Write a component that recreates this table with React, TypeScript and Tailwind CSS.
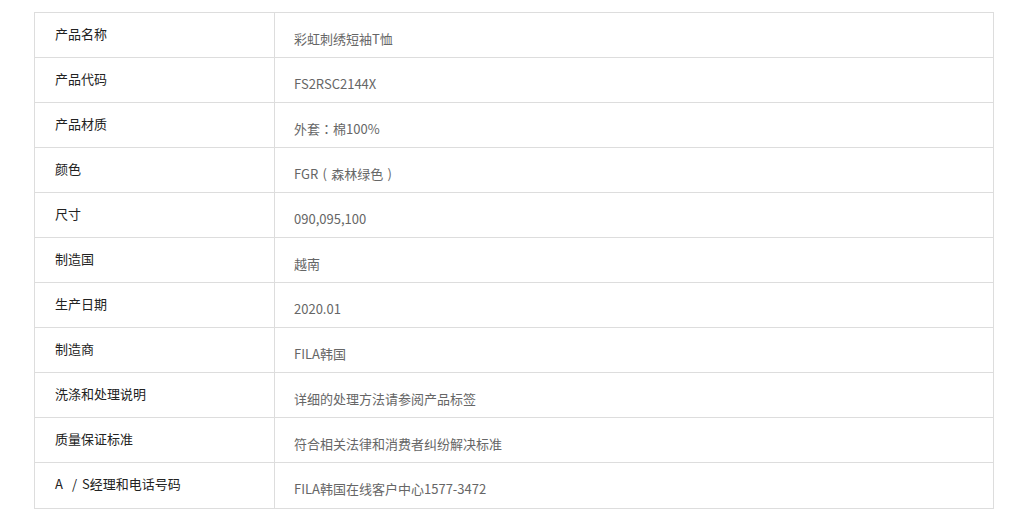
import type React from "react"

// full-width punctuation centred in its box, as in the reference font
const P = ({ c }: { c: string }) => (
  <span style={{ fontFamily: '"Noto Sans CJK TC", sans-serif' }}>{c}</span>
)
const Box = ({ c }: { c: string }) => <span className="inline-block w-[13px] text-center">{c}</span>

const rows: [React.ReactNode, React.ReactNode][] = [
  ["产品名称", "彩虹刺绣短袖T恤"],
  ["产品代码", "FS2RSC2144X"],
  ["产品材质", <>外套<P c="：" />棉100%</>],
  ["颜色", <>FGR<Box c="(" />森林绿色<Box c=")" /></>],
  ["尺寸", "090,095,100"],
  ["制造国", "越南"],
  ["生产日期", "2020.01"],
  ["制造商", "FILA韩国"],
  ["洗涤和处理说明", "详细的处理方法请参阅产品标签"],
  ["质量保证标准", "符合相关法律和消费者纠纷解决标准"],
  [<>A<span className="ml-[9px] mr-[5px]">/</span>S经理和电话号码</>, "FILA韩国在线客户中心1577-3472"],
]

export default function App() {
  return (
    <div
      className="min-h-[529px] bg-white pt-[12px] pl-[34px]"
      style={{ fontFamily: '"Microsoft YaHei", "Noto Sans CJK SC", sans-serif' }}
    >
      <div className="w-[960px] border border-[#dddddd] text-[13px]">
        {rows.map(([label, value], i) => (
          <div
            key={i}
            className={`grid grid-cols-[240px_1fr] h-[45px] ${i < rows.length - 1 ? "border-b border-[#dddddd]" : ""}`}
          >
            <div className="flex items-center pl-[20px] pb-[3px] border-r border-[#dddddd] text-[#222222]">
              <span>{label}</span>
            </div>
            <div className="flex items-center pl-[19px] pt-[7px] text-[#666666]">
              <span>{value}</span>
            </div>
          </div>
        ))}
      </div>
    </div>
  )
}
